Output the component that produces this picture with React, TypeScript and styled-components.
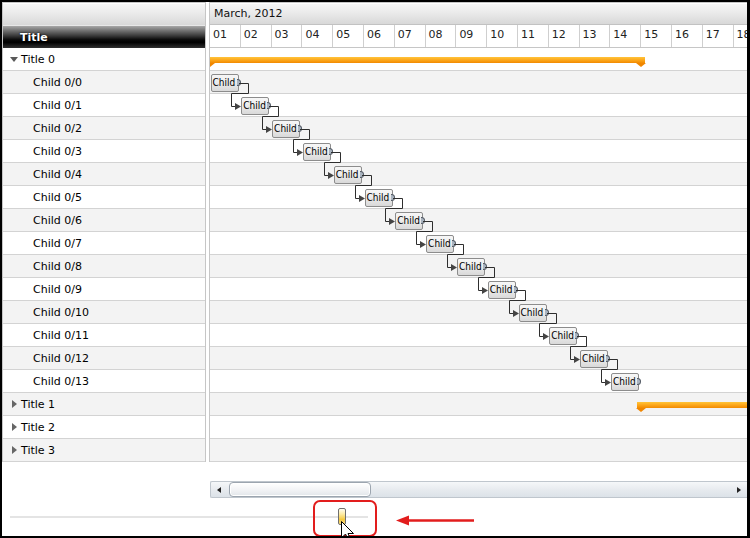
import React from "react";
import styled, { createGlobalStyle } from "styled-components";

const DAY_W = 30.8;
const ROW_H = 23;

const GlobalStyle = createGlobalStyle`
  html, body { margin: 0; padding: 0; background: #000; }
  body {
    font-family: "DejaVu Sans", Verdana, sans-serif;
    font-size: 11px;
    color: #000;
  }
`;

const Frame = styled.div`
  position: relative;
  width: 750px;
  height: 538px;
  box-sizing: border-box;
  border: solid #000;
  border-width: 2px 3px 2px 2px;
  background: #fff;
  overflow: hidden;
  display: flex;
  flex-direction: column;
`;

const Grid = styled.div`
  display: flex;
  gap: 3px;
  align-items: flex-start;
`;

const LeftPanel = styled.div`
  width: 204px;
  flex: 0 0 204px;
  box-sizing: border-box;
  border: 1px solid #c6c6c6;
  border-bottom: none;
`;

const GrayBar = styled.div`
  height: 22px;
  box-sizing: border-box;
  background: linear-gradient(#f7f7f7 0%, #ebebeb 45%, #d8d8d8 100%);
  box-shadow: inset 0 1px 0 #fff;
  display: flex;
  align-items: center;
`;

const MonthBar = styled(GrayBar)`
  border-bottom: 1px solid #c2c2c2;
  padding-left: 4px;
  color: #111;
`;

const DarkHeader = styled.div`
  height: 23px;
  box-sizing: border-box;
  border-top: 1px solid #e8e8e8;
  background: linear-gradient(#a8a8a8 0%, #747474 20%, #3a3a3a 44%, #0a0a0a 62%, #000 74%, #303030 100%);
  color: #fff;
  font-weight: bold;
  text-shadow: 1px 1px 1px #000, 0 0 2px #000;
  display: flex;
  align-items: center;
  padding-left: 17px;
`;

const TreeRow = styled.div<{ $alt: boolean; $child: boolean }>`
  height: ${ROW_H}px;
  box-sizing: border-box;
  border-bottom: 1px solid #d3d3d3;
  background: ${(p) => (p.$alt ? "#f3f3f3" : "#fff")};
  display: flex;
  align-items: center;
  padding-left: ${(p) => (p.$child ? 30 : 7)}px;
  white-space: nowrap;
`;

const Expander = styled.span`
  width: 8px;
  height: 9px;
  margin-right: 3px;
  display: flex;
  align-items: center;
  justify-content: center;
`;

const Caret = styled.span<{ $open: boolean }>`
  width: 0;
  height: 0;
  ${(p) =>
    p.$open
      ? `border-left: 4px solid transparent;
         border-right: 4px solid transparent;
         border-top: 5px solid #595959;`
      : `border-top: 4.5px solid transparent;
         border-bottom: 4.5px solid transparent;
         border-left: 5px solid #666;`}
`;

const RightPanel = styled.div`
  flex: 1;
  min-width: 0;
  box-sizing: border-box;
  border: 1px solid #c6c6c6;
  border-right: none;
  border-bottom: none;
  overflow: hidden;
`;

const DaysRow = styled.div`
  display: flex;
  height: 23px;
  box-sizing: border-box;
  border-bottom: 1px solid #c6c6c6;
`;

const DayCell = styled.div`
  flex: 0 0 ${DAY_W}px;
  box-sizing: border-box;
  border-right: 1px solid #cfcfcf;
  padding: 3px 0 0 3px;
  line-height: 13px;
  color: #222;
`;

const ChartBody = styled.div`
  position: relative;
`;

const ChartRow = styled.div<{ $alt: boolean }>`
  position: relative;
  height: ${ROW_H}px;
  box-sizing: border-box;
  border-bottom: 1px solid #d3d3d3;
  background: ${(p) => (p.$alt ? "#f3f3f3" : "#fff")};
`;

const SummaryBar = styled.div`
  position: absolute;
  top: 9px;
  height: 6px;
  background: linear-gradient(#ffc43a 0%, #fdaa1e 45%, #f28a00 100%);
  &::before,
  &::after {
    content: "";
    position: absolute;
    top: 6px;
    border-left: 5px solid transparent;
    border-right: 5px solid transparent;
    border-top: 4px solid #f08600;
  }
  &::before { left: -1px; }
  &::after { right: -1px; }
`;

const TaskBox = styled.div`
  position: absolute;
  top: 3px;
  width: 28px;
  height: 18px;
  box-sizing: border-box;
  border: 1px solid #8c8c8c;
  border-radius: 2px;
  background: linear-gradient(#f7f7f7 0%, #ececec 45%, #d9d9d9 100%);
  font-family: "DejaVu Sans Condensed", "DejaVu Sans", sans-serif;
  font-stretch: condensed;
  font-size: 10px;
  line-height: 15px;
  padding-left: 1px;
  color: #000;
  white-space: nowrap;
`;

const Handle = styled.span`
  position: absolute;
  right: -3px;
  top: 4px;
  width: 4px;
  height: 7px;
  box-sizing: border-box;
  border: 1px solid #555c66;
  border-left: none;
  border-radius: 0 4px 4px 0;
  background: #aab4c0;
`;

const Links = styled.svg`
  position: absolute;
  left: 0;
  top: 0;
  pointer-events: none;
  overflow: visible;
`;

const Scrollbar = styled.div`
  margin: 19px 0 0 208px;
  height: 17px;
  box-sizing: border-box;
  border: 1px solid #bfc6cd;
  border-right: none;
  border-radius: 2px 0 0 2px;
  background: linear-gradient(#f5f7f9 0%, #e6eaee 55%, #dce2e8 100%);
  display: flex;
  align-items: center;
`;

const ScrollBtn = styled.div`
  flex: 0 0 16px;
  height: 100%;
  display: flex;
  align-items: center;
  justify-content: center;
`;

const ScrollArrow = styled.span<{ $dir: "left" | "right" }>`
  width: 0;
  height: 0;
  border-top: 3.5px solid transparent;
  border-bottom: 3.5px solid transparent;
  ${(p) =>
    p.$dir === "left"
      ? "border-right: 4px solid #222;"
      : "border-left: 4px solid #222;"}
`;

const ScrollThumb = styled.div`
  margin-left: 2px;
  width: 142px;
  height: 15px;
  box-sizing: border-box;
  border: 1px solid #9ca5af;
  border-radius: 4px;
  background: linear-gradient(#ffffff 0%, #f3f4f6 50%, #e2e6ea 100%);
  box-shadow: inset 0 0 0 1px #fff;
`;

const ScrollSpacer = styled.div`
  flex: 1;
`;

const SliderRow = styled.div`
  position: relative;
  margin-top: 10px;
  height: 18px;
  display: flex;
  align-items: center;
`;

const SliderTrack = styled.div`
  margin-left: 8px;
  width: 358px;
  height: 2px;
  background: #e4e4e4;
`;

const SliderThumb = styled.div`
  position: absolute;
  left: 336px;
  top: 0;
  width: 8px;
  height: 17px;
  box-sizing: border-box;
  border: 1px solid #6f6f6f;
  border-radius: 2px;
  background: linear-gradient(#fffdf2 0%, #fdeaa0 35%, #f5c940 70%, #f9dd86 100%);
`;

const Callout = styled.div`
  position: absolute;
  left: 311px;
  top: 498px;
  width: 64px;
  height: 37px;
  box-sizing: border-box;
  border: 2px solid #e21d1d;
  border-radius: 7px;
`;

const Overlay = styled.svg`
  position: absolute;
  pointer-events: none;
`;

type Row = { label: string; child: boolean; open?: boolean };

const rows: Row[] = [
  { label: "Title 0", child: false, open: true },
  ...Array.from({ length: 14 }, (_, i) => ({ label: `Child 0/${i}`, child: true })),
  { label: "Title 1", child: false, open: false },
  { label: "Title 2", child: false, open: false },
  { label: "Title 3", child: false, open: false },
];

const days = Array.from({ length: 19 }, (_, i) => String(i + 1).padStart(2, "0"));

const taskLeft = (i: number) => i * DAY_W + 0.5;

function LinkLines() {
  const paths: string[] = [];
  const heads: string[] = [];
  for (let i = 0; i < 13; i++) {
    const rowTop = (i + 1) * ROW_H;
    const L = Math.round(taskLeft(i));
    const N = Math.round(taskLeft(i + 1));
    const y1 = rowTop + 12.5;
    const yMid = rowTop + 22.5;
    const y2 = rowTop + ROW_H + 12.5;
    const xOut = L + 37.5;
    const xIn = N - 9.5;
    paths.push(`M${L + 28} ${y1} H${xOut} V${yMid} H${xIn} V${y2} H${N - 5}`);
    heads.push(`M${N - 6} ${y2 - 3.5} L${N} ${y2} L${N - 6} ${y2 + 3.5} Z`);
  }
  return (
    <Links width="540" height="414">
      {paths.map((d, k) => (
        <path key={k} d={d} fill="none" stroke="#2e2e2e" strokeWidth="1" />
      ))}
      {heads.map((d, k) => (
        <path key={`h${k}`} d={d} fill="#444" />
      ))}
    </Links>
  );
}

export default function App() {
  return (
    <>
      <GlobalStyle />
      <Frame>
        <Grid>
          <LeftPanel>
            <GrayBar />
            <DarkHeader>Title</DarkHeader>
            {rows.map((r, i) => (
              <TreeRow key={r.label} $alt={i % 2 === 1} $child={r.child}>
                {!r.child && (
                  <Expander>
                    <Caret $open={!!r.open} />
                  </Expander>
                )}
                {r.label}
              </TreeRow>
            ))}
          </LeftPanel>
          <RightPanel>
            <MonthBar>March, 2012</MonthBar>
            <DaysRow>
              {days.map((d) => (
                <DayCell key={d}>{d}</DayCell>
              ))}
            </DaysRow>
            <ChartBody>
              {rows.map((r, i) => (
                <ChartRow key={r.label} $alt={i % 2 === 1}>
                  {i === 0 && (
                    <SummaryBar style={{ left: -4, width: 14 * DAY_W + 8 }} />
                  )}
                  {i === 15 && (
                    <SummaryBar style={{ left: 14 * DAY_W - 4, width: 400 }} />
                  )}
                  {r.child && (
                    <TaskBox style={{ left: taskLeft(i - 1) }}>
                      Child
                      <Handle />
                    </TaskBox>
                  )}
                </ChartRow>
              ))}
              <LinkLines />
            </ChartBody>
          </RightPanel>
        </Grid>

        <Scrollbar>
          <ScrollBtn>
            <ScrollArrow $dir="left" />
          </ScrollBtn>
          <ScrollThumb />
          <ScrollSpacer />
          <ScrollBtn>
            <ScrollArrow $dir="right" />
          </ScrollBtn>
        </Scrollbar>

        <SliderRow>
          <SliderTrack />
          <SliderThumb />
        </SliderRow>

        <Callout />
        <Overlay width="84" height="14" style={{ left: 392, top: 512 }}>
          <path d="M14 6.5 H80" stroke="#e21d1d" strokeWidth="2.5" />
          <path d="M2 6.5 L15 1.5 L15 11.5 Z" fill="#e21d1d" />
        </Overlay>
        <Overlay width="16" height="20" style={{ left: 339, top: 519 }}>
          <path
            d="M0.5 0.5 L0.5 17 L4.5 13 L7.5 19.5 L9.5 18.5 L7 12.5 L12.5 12.5 Z"
            fill="#fff"
            stroke="#000"
            strokeWidth="1"
          />
        </Overlay>
      </Frame>
    </>
  );
}
